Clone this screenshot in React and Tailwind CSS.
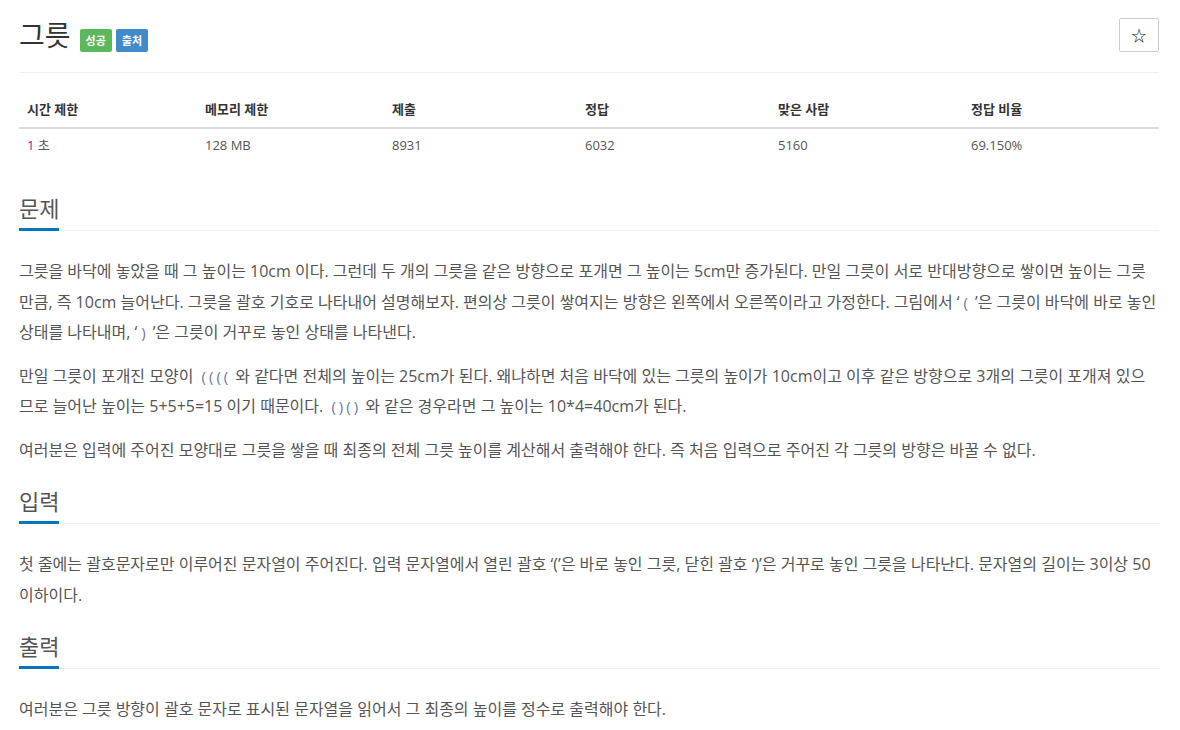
const FONT = { fontFamily: '"Open Sans", "Noto Sans CJK KR", sans-serif' };

const STATS = [
  { label: "시간 제한", value: "1 초", width: "w-[178px]" },
  { label: "메모리 제한", value: "128 MB", width: "w-[187px]" },
  { label: "제출", value: "8931", width: "w-[193px]" },
  { label: "정답", value: "6032", width: "w-[193px]" },
  { label: "맞은 사람", value: "5160", width: "w-[193px]" },
  { label: "정답 비율", value: "69.150%", width: "" },
];

const Bowl = ({ children }) => (
  <span className="mx-[4px] text-[15px] tracking-[3px] text-[#6a7a99]">{children}</span>
);

const Section = ({ title, first, children }) => (
  <section className={first ? "mt-[31px]" : "mt-[21px]"}>
    <div className="flex border-b border-[#eee] mb-[25px]">
      <h2 className="-mb-px border-b-[3px] border-[#0076c0] pb-[5px] text-[22px] leading-[30px] font-normal text-[#555]">
        {title}
      </h2>
    </div>
    <div className="space-y-[13px] text-[16px] leading-[30.5px] text-[#555]">{children}</div>
  </section>
);

export default function App() {
  return (
    <div className="min-h-screen bg-white pl-[19px] pr-[21px]" style={FONT}>
      <div className="flex items-start justify-between pt-[18px] pb-[20px] border-b border-[#eee]">
        <div className="flex items-end">
          <h1 className="text-[28px] leading-[34px] font-normal text-[#333]">그릇</h1>
          <span className="ml-[9px] inline-block rounded-[2px] bg-[#5cb85c] px-[6px] text-[11px] font-bold leading-[23px] text-white">
            성공
          </span>
          <span className="ml-[4px] inline-block rounded-[2px] bg-[#428bca] px-[6px] text-[11px] font-bold leading-[23px] text-white">
            출처
          </span>
        </div>
        <button
          type="button"
          className="flex h-[34px] w-[40px] items-center justify-center rounded-[2px] border border-[#ccc] bg-white text-[15px] text-[#222]"
        >
          ☆
        </button>
      </div>

      <table className="mt-[19px] w-full table-fixed text-[13px]">
        <thead>
          <tr className="border-b-2 border-[#ddd] text-left">
            {STATS.map((s) => (
              <th key={s.label} className={`${s.width} px-2 py-2 leading-[19px] font-bold text-[#333]`}>
                {s.label}
              </th>
            ))}
          </tr>
        </thead>
        <tbody>
          <tr className="text-[#555]">
            {STATS.map((s, i) => (
              <td key={s.label} className="px-2 py-[7px] leading-[19px]">
                {i === 0 ? (
                  <>
                    <span className="text-[#7b1fa2]">1</span> 초
                  </>
                ) : (
                  s.value
                )}
              </td>
            ))}
          </tr>
        </tbody>
      </table>

      <Section title="문제" first>
        <p>
          그릇을 바닥에 놓았을 때 그 높이는 10cm 이다. 그런데 두 개의 그릇을 같은 방향으로 포개면 그 높이는 5cm만
          증가된다. 만일 그릇이 서로 반대방향으로 쌓이면 높이는 그릇만큼, 즉 10cm 늘어난다. 그릇을 괄호 기호로
          나타내어 설명해보자. 편의상 그릇이 쌓여지는 방향은 왼쪽에서 오른쪽이라고 가정한다. 그림에서 ‘
          <Bowl>(</Bowl>’은 그릇이 바닥에 바로 놓인 상태를 나타내며, ‘<Bowl>)</Bowl>’은 그릇이 거꾸로 놓인 상태를
          나타낸다.
        </p>
        <p>
          만일 그릇이 포개진 모양이 <Bowl>((((</Bowl>와 같다면 전체의 높이는 25cm가 된다. 왜냐하면 처음 바닥에 있는
          그릇의 높이가 10cm이고 이후 같은 방향으로 3개의 그릇이 포개져 있으므로 늘어난 높이는 5+5+5=15 이기
          때문이다. <Bowl>()()</Bowl>와 같은 경우라면 그 높이는 10*4=40cm가 된다.
        </p>
        <p>
          여러분은 입력에 주어진 모양대로 그릇을 쌓을 때 최종의 전체 그릇 높이를 계산해서 출력해야 한다. 즉 처음
          입력으로 주어진 각 그릇의 방향은 바꿀 수 없다.
        </p>
      </Section>

      <Section title="입력">
        <p>
          첫 줄에는 괄호문자로만 이루어진 문자열이 주어진다. 입력 문자열에서 열린 괄호 ‘(’은 바로 놓인 그릇, 닫힌
          괄호 ‘)’은 거꾸로 놓인 그릇을 나타난다. 문자열의 길이는 3이상 50 이하이다.
        </p>
      </Section>

      <Section title="출력">
        <p>여러분은 그릇 방향이 괄호 문자로 표시된 문자열을 읽어서 그 최종의 높이를 정수로 출력해야 한다.</p>
      </Section>
    </div>
  );
}
